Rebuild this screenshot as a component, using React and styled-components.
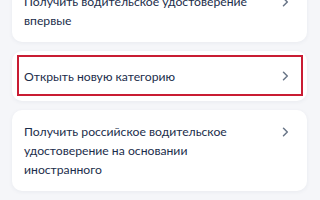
import React from "react";
import styled, { createGlobalStyle } from "styled-components";

const Global = createGlobalStyle`
  html, body {
    margin: 0;
    padding: 0;
    background: #f5f6f9;
    width: 320px;
    height: 200px;
    overflow: hidden;
  }
  body {
    font-family: Lato, "Noto Sans", "Liberation Sans", sans-serif;
  }
`;

const List = styled.div`
  display: flex;
  flex-direction: column;
  gap: 9px;
  width: 295px;
  margin: -20px 0 0 12px;
`;

const Card = styled.div`
  position: relative;
  display: flex;
  align-items: ${(p) => (p.$single ? "center" : "flex-start")};
  justify-content: space-between;
  min-height: 50px;
  box-sizing: border-box;
  padding: 12px 14px 12px 12px;
  background: #ffffff;
  border-radius: 10px;
  box-shadow: 0 1px 4px rgba(30, 50, 90, 0.06);
`;

const Text = styled.div`
  flex: 1;
  max-width: 238px;
  font-size: 12.2px;
  line-height: 19px;
  color: #1b2d4b;
`;

const Chevron = styled.span`
  display: flex;
  align-items: center;
  justify-content: center;
  width: 16px;
  height: 19px;
  flex-shrink: 0;
  margin-left: 8px;
`;

const Highlight = styled.div`
  position: absolute;
  left: 5px;
  right: 4px;
  top: 4px;
  bottom: 5px;
  border: 2px solid #c91c33;
  pointer-events: none;
`;

function Arrow() {
  return (
    <Chevron>
      <svg width="7" height="10" viewBox="0 0 7 10" fill="none">
        <path d="M1.5 1.2 L5.3 5 L1.5 8.8" stroke="#6a7688" strokeWidth="1.5" strokeLinecap="round" strokeLinejoin="round" />
      </svg>
    </Chevron>
  );
}

export default function App() {
  return (
    <>
      <Global />
      <List>
        <Card>
          <Text>Получить водительское удостоверение впервые</Text>
          <Arrow />
        </Card>
        <Card $single>
          <Text>Открыть новую категорию</Text>
          <Arrow />
          <Highlight />
        </Card>
        <Card>
          <Text>Получить российское водительское удостоверение на основании иностранного</Text>
          <Arrow />
        </Card>
      </List>
    </>
  );
}
